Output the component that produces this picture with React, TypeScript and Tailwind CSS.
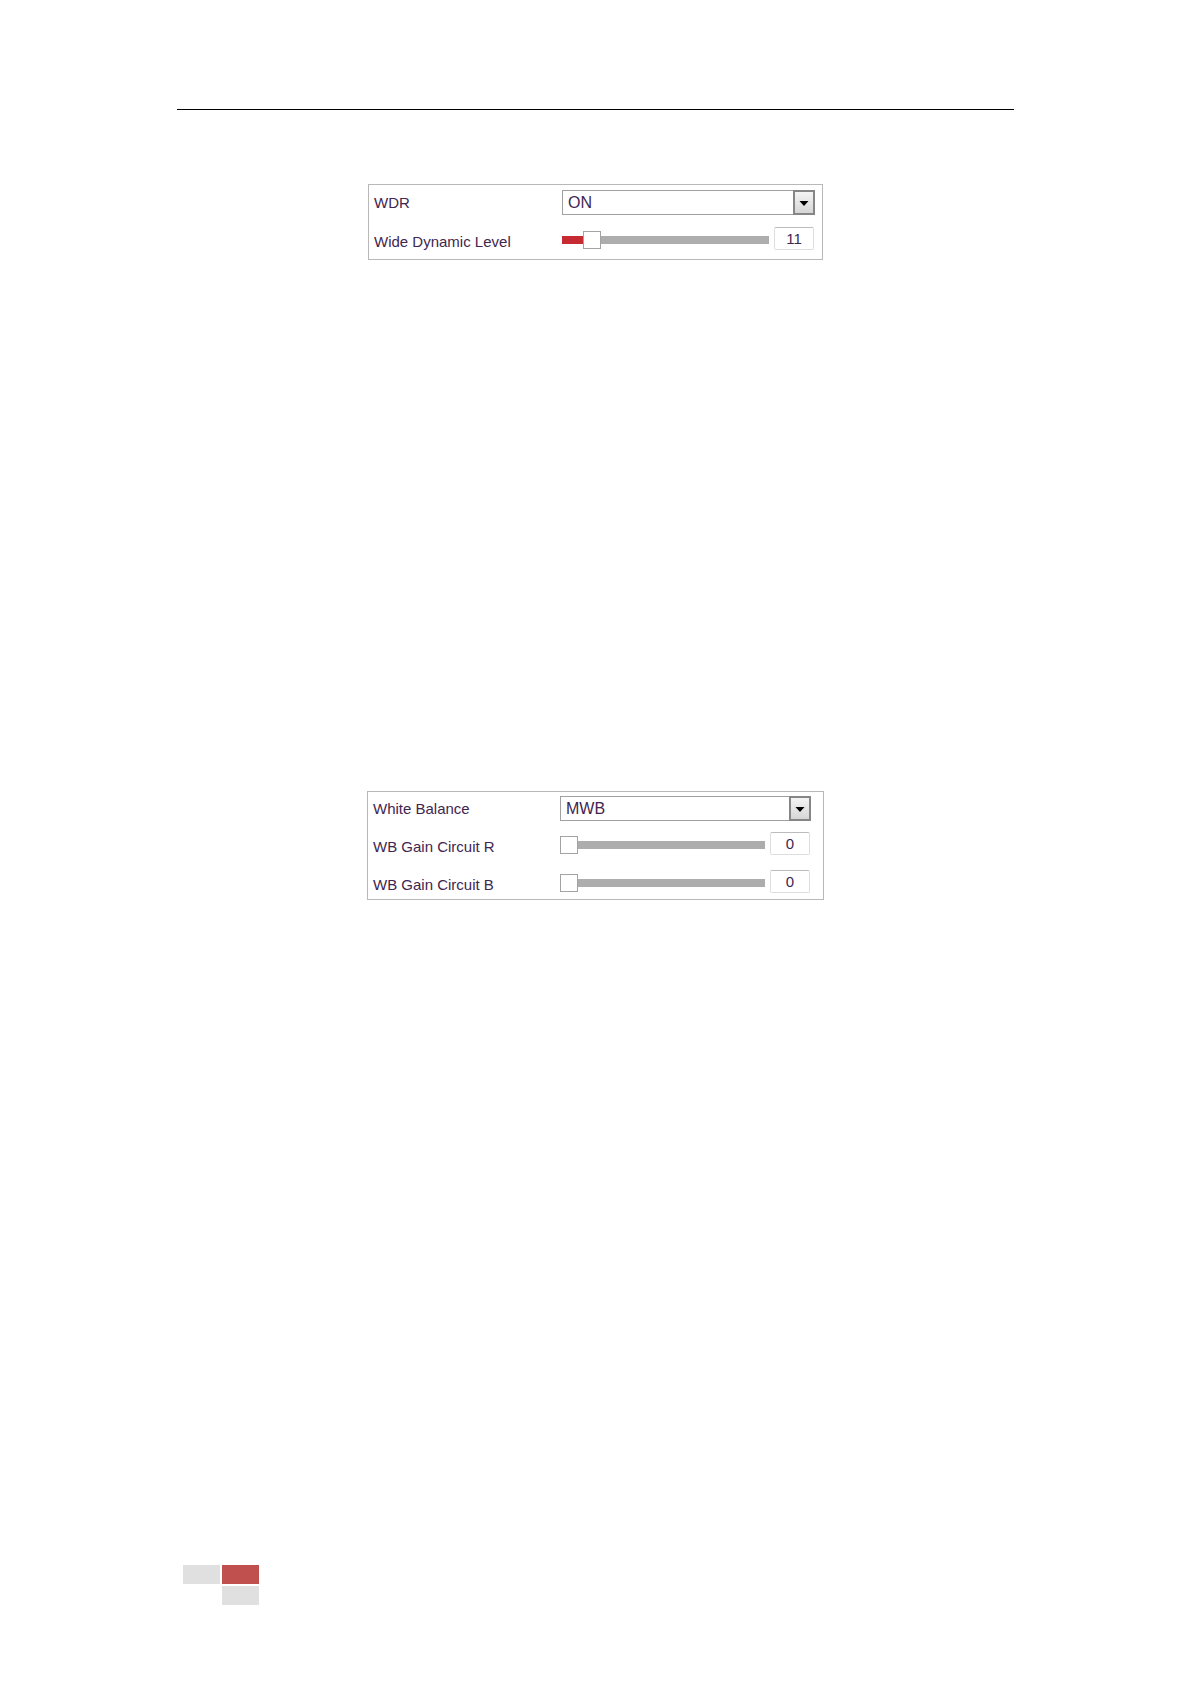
import { useId, useState } from "react";
import type { ReactNode } from "react";

type SelectRowProps = {
  label: string;
  options: string[];
};

type SliderRowProps = {
  label: string;
  initial: number;
};

const labelClass = "w-(--label) shrink-0 text-[15px] leading-6 text-[#3f2650]";

function SelectRow({ label, options }: SelectRowProps) {
  const id = useId();

  return (
    <div className="flex items-center">
      <label htmlFor={id} className={labelClass}>
        {label}
      </label>
      <div className="relative min-w-0 flex-1">
        <select
          id={id}
          className="block h-[25px] w-full appearance-none border border-[#a0a0a0] bg-white pl-[5px] text-[16px] leading-[22px] text-[#3f2650] outline-none"
        >
          {options.map((option) => (
            <option key={option}>{option}</option>
          ))}
        </select>
        <span className="pointer-events-none absolute inset-y-0 right-0 flex w-[22px] items-center justify-center border-2 border-[#868686] bg-linear-to-b from-[#f4f4f4] to-[#d6d6d6]">
          <svg viewBox="0 0 10 5" className="mt-0.5 h-[5px] w-[10px]" aria-hidden="true">
            <path d="M0.5 0h9L5 5z" fill="#000" />
          </svg>
        </span>
      </div>
    </div>
  );
}

function SliderRow({ label, initial }: SliderRowProps) {
  const id = useId();
  const [value, setValue] = useState(initial);

  const update = (next: number) => {
    if (!Number.isNaN(next)) setValue(Math.min(100, Math.max(0, next)));
  };

  return (
    <div className="flex h-[27px]">
      <label htmlFor={id} className={`${labelClass} self-end`}>
        {label}
      </label>
      <div className="flex h-[23px] min-w-0 flex-1 items-end gap-[5px] pr-px">
        <input
          id={id}
          type="range"
          min={0}
          max={100}
          value={value}
          onChange={(event) => update(Number(event.target.value))}
          style={{
            backgroundImage: `linear-gradient(to right, #c62a33 ${value}%, #adadad ${value}%)`,
          }}
          className="h-5 min-w-0 flex-1 appearance-none bg-[length:100%_8px] bg-center bg-no-repeat outline-none [&::-webkit-slider-thumb]:h-[18px] [&::-webkit-slider-thumb]:w-[18px] [&::-webkit-slider-thumb]:appearance-none [&::-webkit-slider-thumb]:border [&::-webkit-slider-thumb]:border-[#a3a3a3] [&::-webkit-slider-thumb]:bg-white"
        />
        <input
          type="text"
          aria-label={`${label} value`}
          value={value}
          onChange={(event) => update(Number(event.target.value))}
          className="h-[23px] w-10 rounded-xs border border-[#dedede] border-t-[#bcbcbc] bg-white text-center text-[15px] leading-5 text-[#3f2650] outline-none"
        />
      </div>
    </div>
  );
}

function Panel({ className, children }: { className: string; children: ReactNode }) {
  return (
    <section className={`mx-auto flex w-full flex-col border border-[#b8b8b8] bg-white pl-[5px] ${className}`}>
      {children}
    </section>
  );
}

export default function App() {
  return (
    <div className="flex min-h-screen flex-col bg-white pr-44 pl-[177px] font-['Liberation_Sans',Arial,sans-serif]">
      <header className="mt-[109px] border-t border-black" />

      <main>
        <Panel className="mt-[74px] max-w-[455px] gap-3 pt-[5px] pr-[7px] pb-[5px] [--label:188px]">
          <SelectRow label="WDR" options={["ON", "OFF"]} />
          <SliderRow label="Wide Dynamic Level" initial={11} />
        </Panel>

        <Panel className="mt-[531px] max-w-[457px] gap-[11px] pt-1 pr-3 pb-0.5 [--label:187px]">
          <SelectRow label="White Balance" options={["MWB", "AWB1", "AWB2"]} />
          <SliderRow label="WB Gain Circuit R" initial={0} />
          <SliderRow label="WB Gain Circuit B" initial={0} />
        </Panel>
      </main>

      <footer className="mt-auto pb-[79px] pl-[6px]">
        <div className="grid w-19 grid-cols-2 gap-0.5">
          <span className="h-[19px] bg-[#e0e0e0]" />
          <span className="h-[19px] bg-[#c0504d]" />
          <span className="col-start-2 h-[19px] bg-[#e0e0e0]" />
        </div>
      </footer>
    </div>
  );
}
